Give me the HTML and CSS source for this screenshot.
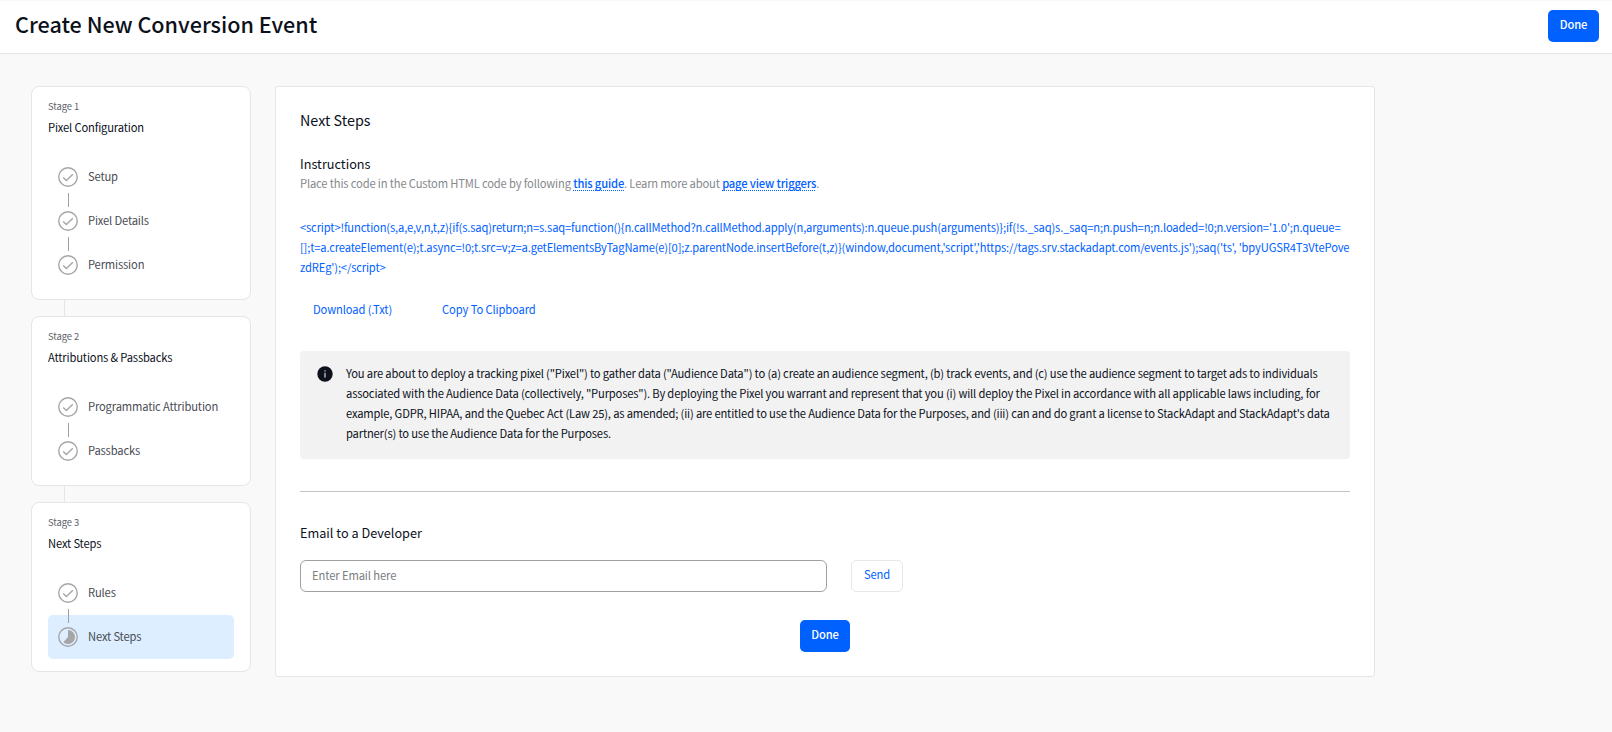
FILE: index.html
```html
<!DOCTYPE html>
<html lang="en">
<head>
    <meta charset="utf-8">
    <title>Create New Conversion Event</title>
    <link rel="stylesheet" href="styles.css">
</head>
<body>
    <svg class="sprite" aria-hidden="true">
        <symbol id="icon-check" viewBox="0 0 20 20">
            <circle cx="10" cy="10" r="9.25" fill="none" stroke="#a6a6a9" stroke-width="1.4"/>
            <path d="M5.2 10.4l3.2 3.2 6.4-6.4" fill="none" stroke="#a6a6a9" stroke-width="1.4"/>
        </symbol>
        <symbol id="icon-progress" viewBox="0 0 20 20">
            <circle cx="10" cy="10" r="9.25" fill="none" stroke="#a6a6a9" stroke-width="1.4"/>
            <path d="M10 10V3a7 7 0 1 1-4.6 12.3z" fill="#a6a6a9"/>
        </symbol>
    </svg>

    <header class="header">
        <h1>Create New Conversion Event</h1>
        <button class="btn btn-primary">Done</button>
    </header>

    <div class="page">
        <aside class="stages">
            <section class="stage">
                <p class="stage-label">Stage 1</p>
                <h2 class="stage-title">Pixel Configuration</h2>
                <ul class="steps">
                    <li><svg class="step-icon"><use href="#icon-check"/></svg><span>Setup</span></li>
                    <li><svg class="step-icon"><use href="#icon-check"/></svg><span>Pixel Details</span></li>
                    <li><svg class="step-icon"><use href="#icon-check"/></svg><span>Permission</span></li>
                </ul>
            </section>
            <section class="stage">
                <p class="stage-label">Stage 2</p>
                <h2 class="stage-title">Attributions &amp; Passbacks</h2>
                <ul class="steps">
                    <li><svg class="step-icon"><use href="#icon-check"/></svg><span>Programmatic Attribution</span></li>
                    <li><svg class="step-icon"><use href="#icon-check"/></svg><span>Passbacks</span></li>
                </ul>
            </section>
            <section class="stage">
                <p class="stage-label">Stage 3</p>
                <h2 class="stage-title">Next Steps</h2>
                <ul class="steps">
                    <li><svg class="step-icon"><use href="#icon-check"/></svg><span>Rules</span></li>
                    <li class="active"><svg class="step-icon"><use href="#icon-progress"/></svg><span>Next Steps</span></li>
                </ul>
            </section>
        </aside>

        <main class="panel">
            <h2 class="panel-title">Next Steps</h2>

            <h3 class="section-title">Instructions</h3>
            <p class="hint">Place this code in the Custom HTML code by following <a href="#">this guide</a>. Learn more about <a href="#">page view triggers</a>.</p>

            <p class="code">&lt;script&gt;!function(s,a,e,v,n,t,z){if(s.saq)return;n=s.saq=function(){n.callMethod?n.callMethod.apply(n,arguments):n.queue.push(arguments)};if(!s._saq)s._saq=n;n.push=n;n.loaded=!0;n.version='1.0';n.queue=<br>[];t=a.createElement(e);t.async=!0;t.src=v;z=a.getElementsByTagName(e)[0];z.parentNode.insertBefore(t,z)}(window,document,'script','https://tags.srv.stackadapt.com/events.js');saq('ts', 'bpyUGSR4T3VtePove<br>zdREg');&lt;/script&gt;</p>

            <div class="code-actions">
                <button class="btn btn-text">Download (.Txt)</button>
                <button class="btn btn-text">Copy To Clipboard</button>
            </div>

            <div class="notice">
                <svg class="notice-icon" viewBox="0 0 16 16">
                    <circle cx="8" cy="8" r="7.7" fill="#0c111b"/>
                    <rect x="7.4" y="4.3" width="1.2" height="1.3" fill="#d5d6d8"/>
                    <rect x="7.4" y="6.8" width="1.2" height="4.8" fill="#d5d6d8"/>
                </svg>
                <p>You are about to deploy a tracking pixel ("Pixel") to gather data ("Audience Data") to (a) create an audience segment, (b) track events, and (c) use the audience segment to target ads to individuals<br>associated with the Audience Data (collectively, "Purposes"). By deploying the Pixel you warrant and represent that you (i) will deploy the Pixel in accordance with all applicable laws including, for<br>example, GDPR, HIPAA, and the Quebec Act (Law 25), as amended; (ii) are entitled to use the Audience Data for the Purposes, and (iii) can and do grant a license to StackAdapt and StackAdapt's data<br>partner(s) to use the Audience Data for the Purposes.</p>
            </div>

            <hr>

            <h3 class="section-title">Email to a Developer</h3>
            <form class="email-form">
                <input type="email" placeholder="Enter Email here">
                <button type="button" class="btn btn-outline">Send</button>
            </form>

            <div class="panel-footer">
                <button class="btn btn-primary">Done</button>
            </div>
        </main>
    </div>
</body>
</html>
```

FILE: styles.css
```css
* {
    box-sizing: border-box;
}

body {
    margin: 0;
    min-height: 100vh;
    background-color: #f9f9f9;
    color: #0c111b;
    font-family: "Noto Sans CJK SC", "Open Sans", sans-serif;
    font-size: 11.2px;
    letter-spacing: -0.16px;
    line-height: 20px;
}

h1, h2, h3, p, ul {
    margin: 0;
    padding: 0;
    font-weight: 400;
}

.sprite {
    display: none;
}

.header {
    display: flex;
    justify-content: space-between;
    align-items: center;
    height: 54px;
    padding: 0 13px 2px 15px;
    background-color: #fff;
    border-top: 1px solid #f8f8f8;
    border-bottom: 1px solid #e4e5e6;
}

.header h1 {
    padding-bottom: 4px;
    font-size: 21.57px;
    font-weight: 500;
    letter-spacing: 0;
    line-height: 30px;
}

.btn {
    height: 32px;
    padding: 0 12px 3px;
    border: none;
    border-radius: 5px;
    font-family: inherit;
    font-size: 11.2px;
    letter-spacing: -0.12px;
    line-height: 20px;
    white-space: nowrap;
    cursor: pointer;
}

.btn-primary {
    width: 51px;
    padding: 0 0 4px;
    background-color: #0061ff;
    color: #fff;
    font-weight: 500;
}

.btn-text {
    padding: 0 13px 2px;
    background: none;
    color: #0061ff;
}

.btn-outline {
    width: 52px;
    padding: 0 0 4px;
    background-color: #fff;
    border: 1px solid #e8e8e9;
    color: #0061ff;
}

.page {
    display: flex;
    align-items: flex-start;
    gap: 24px;
    padding: 32px 31px;
}

/* left column */
.stages {
    display: flex;
    flex-direction: column;
    gap: 16px;
    width: 220px;
}

.stage {
    position: relative;
    padding: 9px 16px 12px;
    background-color: #fff;
    border: 1px solid #e6e6e7;
    border-radius: 8px;
}

.stage + .stage::before {
    content: "";
    position: absolute;
    top: -17px;
    left: 32px;
    width: 1px;
    height: 16px;
    background-color: #e4e5e6;
}

.stage-label {
    color: #5d6168;
    font-size: 9.4px;
    letter-spacing: -0.08px;
}

.stage-title {
    font-size: 11.2px;
    line-height: 22px;
    margin-bottom: 17px;
}

.steps {
    list-style: none;
}

.steps li {
    position: relative;
    display: flex;
    align-items: center;
    gap: 10px;
    height: 44px;
    padding-left: 10px;
    border-radius: 5px;
    color: #4a4d54;
}

.steps li + li::before {
    content: "";
    position: absolute;
    top: -6px;
    left: 20px;
    width: 1px;
    height: 14px;
    background-color: #a0a0a3;
}

.steps li.active {
    background-color: #dceeff;
}

.steps span {
    padding-bottom: 3px;
}

.step-icon {
    width: 20px;
    height: 20px;
}

/* main panel */
.panel {
    width: 1100px;
    height: 591px;
    padding: 23px 24px;
    background-color: #fff;
    border: 1px solid #e6e6e7;
    border-radius: 3px;
}

.panel-title {
    font-size: 14.35px;
    letter-spacing: 0;
    margin-bottom: 24px;
}

.section-title {
    font-size: 12.7px;
    letter-spacing: 0;
}

.hint {
    margin-top: -1px;
    color: #86888c;
}

.hint a {
    color: #0061ff;
    font-weight: 500;
    text-decoration: underline dotted 1px;
    text-underline-offset: 2px;
    text-decoration-skip-ink: none;
}

.code {
    margin-top: 24px;
    color: #0061ff;
    white-space: nowrap;
}

.code-actions {
    display: flex;
    gap: 24px;
    margin: 17px 0 25px;
}

.notice {
    display: flex;
    gap: 13px;
    height: 108px;
    padding: 12px 17px;
    background-color: #f2f2f2;
    border-radius: 4px;
    letter-spacing: -0.17px;
    white-space: nowrap;
}

.notice-icon {
    flex: none;
    width: 16px;
    height: 16px;
    margin-top: 3px;
}

hr {
    height: 1px;
    margin: 32px 0 31px;
    border: none;
    background-color: #c3c4c6;
}

.email-form {
    display: flex;
    gap: 24px;
    margin-top: 17px;
}

.email-form input {
    width: 527px;
    height: 32px;
    padding: 0 11px 2px;
    border: 1px solid #a0a1a5;
    border-radius: 6px;
    font-family: inherit;
    font-size: 11.2px;
    letter-spacing: -0.1px;
}

.email-form input::placeholder {
    color: #7a7c81;
}

.panel-footer {
    display: flex;
    justify-content: center;
    margin-top: 28px;
}

.panel-footer .btn {
    width: 50px;
}
```
